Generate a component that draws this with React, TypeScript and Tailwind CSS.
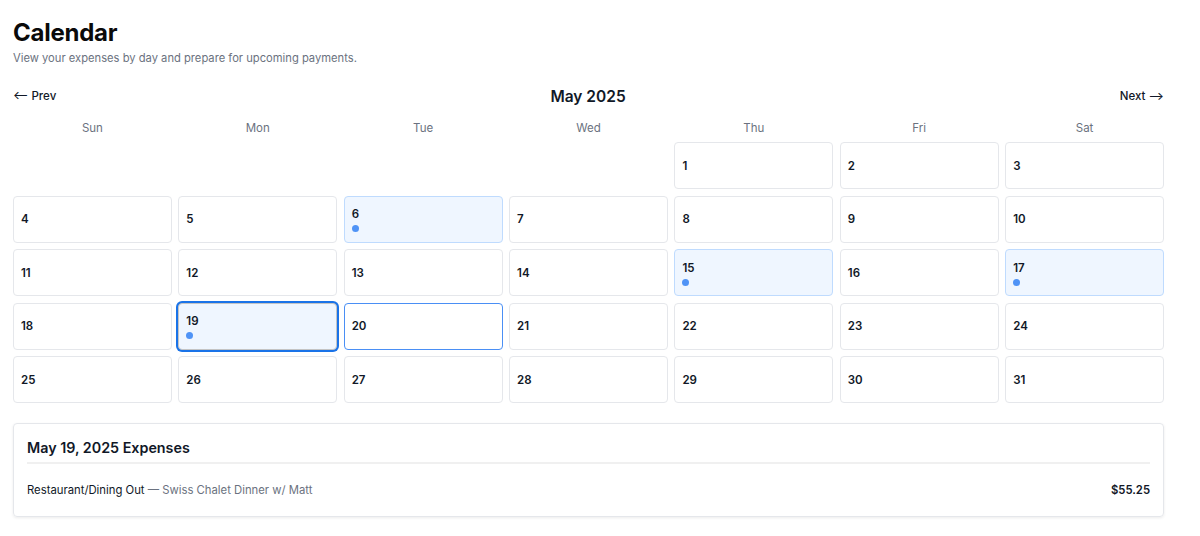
import React from "react";

type Cell = { day: number | null; dot?: boolean };

const dots = new Set([6, 15, 17, 19]);

export default function App() {
  const cells: Cell[] = [];
  for (let i = 0; i < 4; i++) cells.push({ day: null });
  for (let d = 1; d <= 31; d++) cells.push({ day: d, dot: dots.has(d) });
  const days = ["Sun", "Mon", "Tue", "Wed", "Thu", "Fri", "Sat"];

  return (
    <div className="min-h-[536px] bg-white text-[#111827] pl-[13px] pt-[18px]" style={{ fontFamily: "Inter, 'Noto Sans', sans-serif" }}>
      <div className="w-[1151px]">
        <h1 className="text-[24px] font-bold leading-[30px] tracking-[-0.01em] text-[#0a0a0a]">Calendar</h1>
        <p className="mt-[1px] text-[11.2px] leading-[18px] text-[#6b7280]">View your expenses by day and prepare for upcoming payments.</p>

        <div className="mt-[17px] flex items-center justify-between h-[26px]">
          <button className="text-[11.5px] font-medium text-[#111827]">⟵ Prev</button>
          <div className="text-[15.5px] font-semibold text-[#111827]">May 2025</div>
          <button className="text-[11.5px] font-medium text-[#111827]">Next ⟶</button>
        </div>

        <div className="mt-[9px] grid grid-cols-7 gap-x-[6.5px]">
          {days.map((d) => (
            <div key={d} className="text-center text-[11.5px] leading-[18px] text-[#6b7280]">{d}</div>
          ))}
        </div>

        <div className="mt-[5px] grid grid-cols-7 gap-x-[6.5px] gap-y-[6.5px]">
          {cells.map((c, i) => {
            if (c.day === null) return <div key={i} className="h-[47px]" />;
            const selected = c.day === 19;
            const today = c.day === 20;
            let cls = "border-[#e5e7eb] bg-white";
            if (c.dot) cls = "border-[#bfdbfe] bg-[#eff6ff]";
            if (selected) cls = "border-[#c4c4c4] bg-[#eff6ff] ring-2 ring-[#1a73e8]";
            if (today) cls = "border-[#4a8ff5] bg-white";
            return (
              <div key={i} className={`h-[47px] rounded-[4px] border px-[7px] flex flex-col justify-center ${cls}`}>
                <div className="text-[11.5px] font-semibold leading-[16px] text-[#111827]">{c.day}</div>
                {c.dot && <div className="mt-[3px] h-[7px] w-[7px] rounded-full bg-[#4f93f6]" />}
              </div>
            );
          })}
        </div>

        <div className="mt-[20px] rounded-[4px] border border-[#e5e7eb] shadow-[0_1px_3px_rgba(0,0,0,0.08)] px-[13px] pt-[13px] pb-[17px]">
          <h2 className="text-[14.3px] font-semibold leading-[22px] text-[#111827]">May 19, 2025 Expenses</h2>
          <div className="mt-[3px] h-[2px] bg-[#f0f0f0]" />
          <div className="mt-[17px] flex items-center justify-between text-[11.3px] leading-[18px]">
            <div>
              <span className="text-[#111827]">Restaurant/Dining Out</span>
              <span className="text-[#6b7280]"> — Swiss Chalet Dinner w/ Matt</span>
            </div>
            <div className="font-semibold text-[#111827]">$55.25</div>
          </div>
        </div>
      </div>
    </div>
  );
}
